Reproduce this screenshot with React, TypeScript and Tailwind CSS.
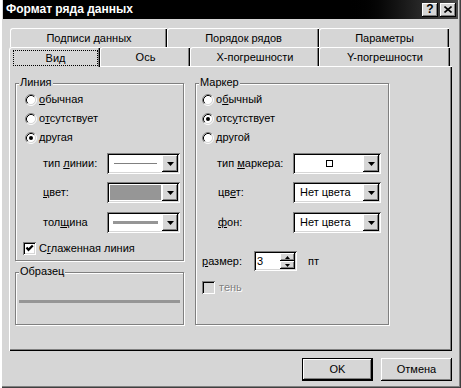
import React from "react";

const sunken =
  "shadow-[inset_1px_1px_#808080,inset_-1px_-1px_#ffffff,inset_2px_2px_#000000,inset_-2px_-2px_#d6d6d6]";
const raised =
  "shadow-[inset_-1px_-1px_#000000,inset_1px_1px_#ffffff,inset_-2px_-2px_#808080]";
const etched = "border border-[#808080] shadow-[inset_1px_1px_#ffffff,1px_1px_#ffffff]";
const tabEdge =
  "border-t border-l border-white rounded-tl-[3px] shadow-[inset_-1px_0_#000000,inset_-2px_0_#808080]";

function Radio({ checked = false }: { checked?: boolean }) {
  return (
    <svg width="12" height="12" viewBox="0 0 12 12" className="shrink-0">
      <circle cx="6" cy="6" r="4.5" fill="#fff" />
      <path d="M2.11 9.89 A5.5 5.5 0 0 1 9.89 2.11" fill="none" stroke="#808080" />
      <path d="M9.89 2.11 A5.5 5.5 0 0 1 2.11 9.89" fill="none" stroke="#fff" />
      <path d="M2.82 9.18 A4.5 4.5 0 0 1 9.18 2.82" fill="none" stroke="#000" />
      <path d="M9.18 2.82 A4.5 4.5 0 0 1 2.82 9.18" fill="none" stroke="#d6d6d6" />
      {checked && <circle cx="6" cy="6" r="2" fill="#000" />}
    </svg>
  );
}

function Check({ checked = false, disabled = false }: { checked?: boolean; disabled?: boolean }) {
  return (
    <div
      className={`w-[13px] h-[13px] shrink-0 flex items-center justify-center ${sunken} ${
        disabled ? "bg-[#d6d6d6]" : "bg-white"
      }`}
    >
      {checked && (
        <svg width="9" height="9" viewBox="0 0 9 9">
          <path d="M1.5 3.5 L3.5 5.8 L7.8 1.5" fill="none" stroke="#000" strokeWidth="2.2" />
        </svg>
      )}
    </div>
  );
}

function Arrow() {
  return (
    <svg width="7" height="4" viewBox="0 0 7 4">
      <path d="M0 0h7L3.5 4z" fill="#000" />
    </svg>
  );
}

function Combo({ className, children }: { className: string; children?: React.ReactNode }) {
  return (
    <div className={`${className} h-[21px] p-[2px] flex bg-white ${sunken}`}>
      <div className="flex-1 flex items-center min-w-0">{children}</div>
      <div className={`w-[16px] bg-[#d6d6d6] flex items-center justify-center ${raised}`}>
        <Arrow />
      </div>
    </div>
  );
}

function Legend({ children }: { children: React.ReactNode }) {
  return (
    <span className="absolute left-[3px] top-[-8px] px-[1px] bg-[#d6d6d6] leading-[13px]">
      {children}
    </span>
  );
}

function RadioRow({ checked, children }: { checked?: boolean; children: React.ReactNode }) {
  return (
    <div className="h-[19px] flex items-center gap-[2px]">
      <Radio checked={checked} />
      <span>{children}</span>
    </div>
  );
}

export default function App(): React.JSX.Element {
  return (
    <div className="w-[461px] h-[388px] bg-[#d6d6d6] flex flex-col text-[11px] leading-[13px] text-black font-['Liberation_Sans',Arial,sans-serif] shadow-[inset_2px_0_#ffffff,inset_-1px_-1px_#404040,inset_-2px_-2px_#808080]">
      {/* title bar */}
      <div className="mx-[3px] h-[19px] shrink-0 flex items-center pl-[3px] pr-[2px] bg-linear-to-r from-black via-black via-75% to-[#4a4a4a]">
        <span className="flex-1 text-white font-bold text-[12px]">Формат ряда данных</span>
        <div className="flex gap-[2px]">
          <div className={`w-[16px] h-[14px] bg-[#d6d6d6] flex items-center justify-center font-bold text-[12px] ${raised}`}>
            ?
          </div>
          <div className={`w-[16px] h-[14px] bg-[#d6d6d6] flex items-center justify-center ${raised}`}>
            <svg width="8" height="7" viewBox="0 0 8 7">
              <path d="M0.5 0.5 L7.5 6.5 M7.5 0.5 L0.5 6.5" stroke="#000" strokeWidth="1.6" />
            </svg>
          </div>
        </div>
      </div>

      {/* tabs */}
      <div className="ml-[9px] mt-[9px] w-[443px] flex flex-col">
        <div className="ml-[1px] h-[19px] flex">
          <div className={`w-[157px] flex items-center justify-center ${tabEdge}`}>Подписи данных</div>
          <div className={`w-[152px] flex items-center justify-center ${tabEdge}`}>Порядок рядов</div>
          <div className={`w-[130px] flex items-center justify-center ${tabEdge}`}>Параметры</div>
        </div>
        <div className="h-[19px] flex items-start">
          <div className={`relative z-10 w-[91px] h-[20px] bg-[#d6d6d6] pl-[3px] pr-[2px] pt-[2px] pb-[1px] flex ${tabEdge}`}>
            <div className="flex-1 border border-dotted border-black flex items-center justify-center">Вид</div>
          </div>
          <div className={`w-[90px] h-[19px] flex items-center justify-center ${tabEdge}`}>Ось</div>
          <div className={`w-[129px] h-[19px] flex items-center justify-center ${tabEdge}`}>X-погрешности</div>
          <div className={`w-[131px] h-[19px] flex items-center justify-center ${tabEdge}`}>Y-погрешности</div>
        </div>

        {/* panel */}
        <div className="h-[285px] pl-[6px] pt-[17px] flex gap-[11px] shadow-[inset_1px_1px_#ffffff,inset_-1px_-1px_#000000,inset_-2px_-2px_#808080]">
          {/* left column */}
          <div className="flex flex-col gap-[11px]">
            <div className={`relative w-[169px] h-[178px] ${etched}`}>
              <Legend>Линия</Legend>
              <div className="flex flex-col pt-[6px] pl-[9px]">
                <RadioRow>
                  <span className="underline">о</span>бычная
                </RadioRow>
                <RadioRow>
                  о<span className="underline">т</span>сутствует
                </RadioRow>
                <RadioRow checked>другая</RadioRow>
                <div className="mt-[6px] flex items-center">
                  <span className="ml-[18px] w-[64px]">
                    тип <span className="underline">л</span>инии:
                  </span>
                  <Combo className="w-[73px]">
                    <div className="ml-[5px] w-[43px] h-px bg-[#808080]" />
                  </Combo>
                </div>
                <div className="mt-[8px] flex items-center">
                  <span className="ml-[18px] w-[64px]">
                    <span className="underline">ц</span>вет:
                  </span>
                  <Combo className="w-[73px]">
                    <div className="m-[1px] self-stretch flex-1 bg-[#969696]" />
                  </Combo>
                </div>
                <div className="mt-[9px] flex items-center">
                  <span className="ml-[18px] w-[64px]">
                    тол<span className="underline">щ</span>ина
                  </span>
                  <Combo className="w-[73px]">
                    <div className="ml-[4px] w-[45px] h-[3px] bg-[#969696]" />
                  </Combo>
                </div>
                <div className="mt-[7px] ml-[-2px] h-[16px] flex items-center gap-[3px]">
                  <Check checked />
                  <span>
                    С<span className="underline">г</span>лаженная линия
                  </span>
                </div>
              </div>
            </div>
            <div className={`relative w-[169px] h-[53px] pt-[27px] px-[3px] ${etched}`}>
              <Legend>Образец</Legend>
              <div className="h-[3px] bg-[#969696]" />
            </div>
          </div>

          {/* right column */}
          <div className={`relative w-[194px] h-[242px] ${etched}`}>
            <Legend>Маркер</Legend>
            <div className="flex flex-col pt-[6px] pl-[6px]">
              <RadioRow>
                о<span className="underline">б</span>ычный
              </RadioRow>
              <RadioRow checked>
                отс<span className="underline">у</span>тствует
              </RadioRow>
              <RadioRow>другой</RadioRow>
              <div className="mt-[6px] flex items-center">
                <span className="ml-[15px] w-[76px]">
                  тип <span className="underline">м</span>аркера:
                </span>
                <Combo className="w-[88px]">
                  <div className="flex-1 flex justify-center">
                    <div className="w-[7px] h-[7px] border border-black" />
                  </div>
                </Combo>
              </div>
              <div className="mt-[8px] flex items-center">
                <span className="ml-[16px] w-[75px]">
                  цв<span className="underline">е</span>т:
                </span>
                <Combo className="w-[88px]">
                  <span className="ml-[5px]">Нет цвета</span>
                </Combo>
              </div>
              <div className="mt-[9px] flex items-center">
                <span className="ml-[16px] w-[75px]">
                  <span className="underline">ф</span>он:
                </span>
                <Combo className="w-[88px]">
                  <span className="ml-[5px]">Нет цвета</span>
                </Combo>
              </div>
              <div className="mt-[18px] flex items-center">
                <span className="w-[52px]">
                  <span className="underline">р</span>азмер:
                </span>
                <div className={`w-[43px] h-[20px] p-[2px] flex bg-white ${sunken}`}>
                  <span className="flex-1 flex items-center pl-[1px]">3</span>
                  <div className="w-[15px] flex flex-col">
                    <div className={`flex-1 bg-[#d6d6d6] flex items-center justify-center ${raised}`}>
                      <svg width="5" height="3" viewBox="0 0 5 3">
                        <path d="M0 3h5L2.5 0z" fill="#000" />
                      </svg>
                    </div>
                    <div className={`flex-1 bg-[#d6d6d6] flex items-center justify-center ${raised}`}>
                      <svg width="5" height="3" viewBox="0 0 5 3">
                        <path d="M0 0h5L2.5 3z" fill="#000" />
                      </svg>
                    </div>
                  </div>
                </div>
                <span className="ml-[11px]">пт</span>
              </div>
              <div className="mt-[8px] h-[16px] flex items-center gap-[4px]">
                <Check disabled />
                <span className="text-[#808080] [text-shadow:1px_1px_0_#ffffff]">тень</span>
              </div>
            </div>
          </div>
        </div>
      </div>

      {/* buttons */}
      <div className="mt-[7px] mr-[9px] flex justify-end gap-[8px]">
        <div className="w-[71px] h-[23px] border border-black flex">
          <div className={`flex-1 flex items-center justify-center ${raised}`}>OK</div>
        </div>
        <div className={`w-[71px] h-[23px] flex items-center justify-center ${raised}`}>Отмена</div>
      </div>
    </div>
  );
}
